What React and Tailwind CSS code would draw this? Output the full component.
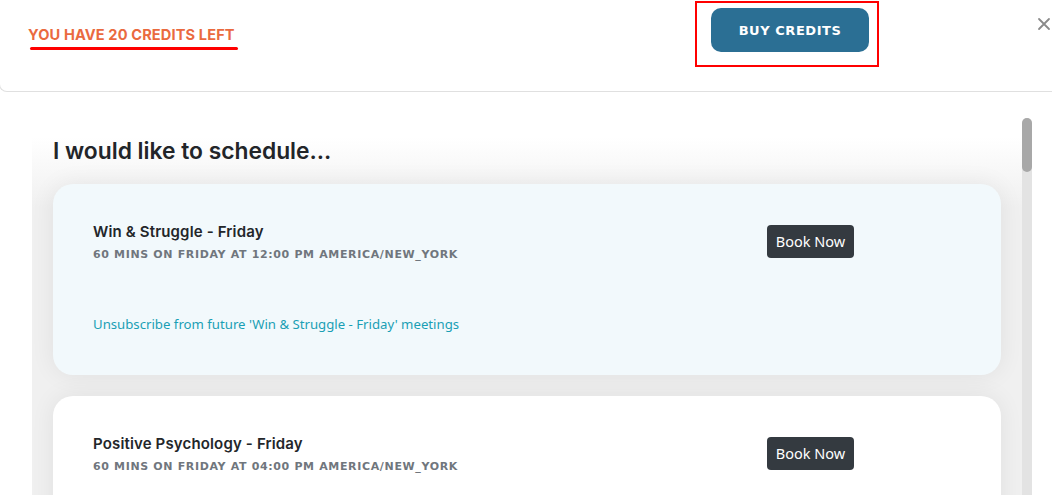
export default function App() {
  const cards = [
    { title: "Win & Struggle - Friday", time: "12:00 PM", bg: "bg-[#f2f9fc]", unsub: true },
    { title: "Positive Psychology - Friday", time: "04:00 PM", bg: "bg-white", unsub: false },
  ];
  return (
    <div className="w-[1052px] h-[495px] overflow-hidden bg-white flex flex-col font-['Inter',sans-serif]">
      <header className="h-[92px] shrink-0 flex items-start border-b border-l border-[#e0e0e0] rounded-bl-[8px] -ml-px">
        <div className="w-[695px] pl-[28px] pt-[22px]">
          <div className="inline-flex flex-col">
            <span className="text-[14.6px] leading-[20px] font-bold text-[#ea6a3f] uppercase tracking-[0.12px]">
              You have 20 credits left
            </span>
            <span className="mt-[2px] ml-[2px] h-[3px] w-[208px] rounded-full bg-[#ff0000]" />
          </div>
        </div>
        <div className="mt-px w-[184px] h-[66px] border-2 border-[#ff0000] pl-[14px] pt-[5px]">
          <button className="w-[158px] h-[44px] rounded-[10px] bg-[#2b6f94] text-white text-[13px] font-bold font-['DejaVu_Sans',sans-serif] tracking-[0.55px] leading-none">
            BUY CREDITS
          </button>
        </div>
        <div className="flex-1" />
        <div className="pt-[17px] pr-[1px]">
          <svg width="14" height="14" viewBox="0 0 14 14" className="block">
            <path d="M2 2 L12 12 M12 2 L2 12" stroke="#8a8a8a" strokeWidth="1.8" strokeLinecap="round" />
          </svg>
        </div>
      </header>
      <div className="flex-1 flex min-h-0">
        <div className="w-[32px] shrink-0" />
        <main className="w-[990px] shrink-0 px-[21px] pt-[45px] bg-[linear-gradient(to_bottom,#ffffff_0px,#ffffff_45px,#f0f0f0_115px)]">
          <h1 className="text-[22.8px] leading-[28px] font-semibold text-[#222529] mb-[19px]">
            I would like to schedule...
          </h1>
          <div className="flex flex-col gap-[21px]">
            {cards.map((c) => (
              <div
                key={c.title}
                className={`${c.bg} rounded-[20px] h-[191px] shrink-0 pl-[40px] pr-[147px] pt-[38px] shadow-[0_0_24px_rgba(0,0,0,0.07)]`}
              >
                <div className="flex items-start justify-between">
                  <div>
                    <div className="text-[15px] leading-[20px] font-semibold text-[#23262a] tracking-[0.15px]">{c.title}</div>
                    <div className="mt-[6px] text-[11px] leading-[14px] font-bold text-[#70767d] font-['DejaVu_Sans',sans-serif] uppercase tracking-[0.65px]">
                      60 mins on Friday at {c.time} America/New_York
                    </div>
                  </div>
                  <button className="mt-[3px] w-[87px] h-[33px] rounded-[4px] bg-[#343a40] text-white text-[14.5px] font-['Noto_Sans',sans-serif] leading-none">
                    Book Now
                  </button>
                </div>
                {c.unsub && (
                  <div className="mt-[53px] text-[13.2px] leading-[18px] text-[#1a9fb5] font-['Noto_Sans',sans-serif]">
                    Unsubscribe from future 'Win &amp; Struggle - Friday' meetings
                  </div>
                )}
              </div>
            ))}
          </div>
        </main>
        <div className="w-[10px] shrink-0 flex flex-col pt-[26px]">
          <div className="flex-1 bg-[#e3e3e3] rounded-t-full">
            <div className="h-[54px] rounded-full bg-[#a8a8a8]" />
          </div>
        </div>
        <div className="flex-1" />
      </div>
    </div>
  );
}
